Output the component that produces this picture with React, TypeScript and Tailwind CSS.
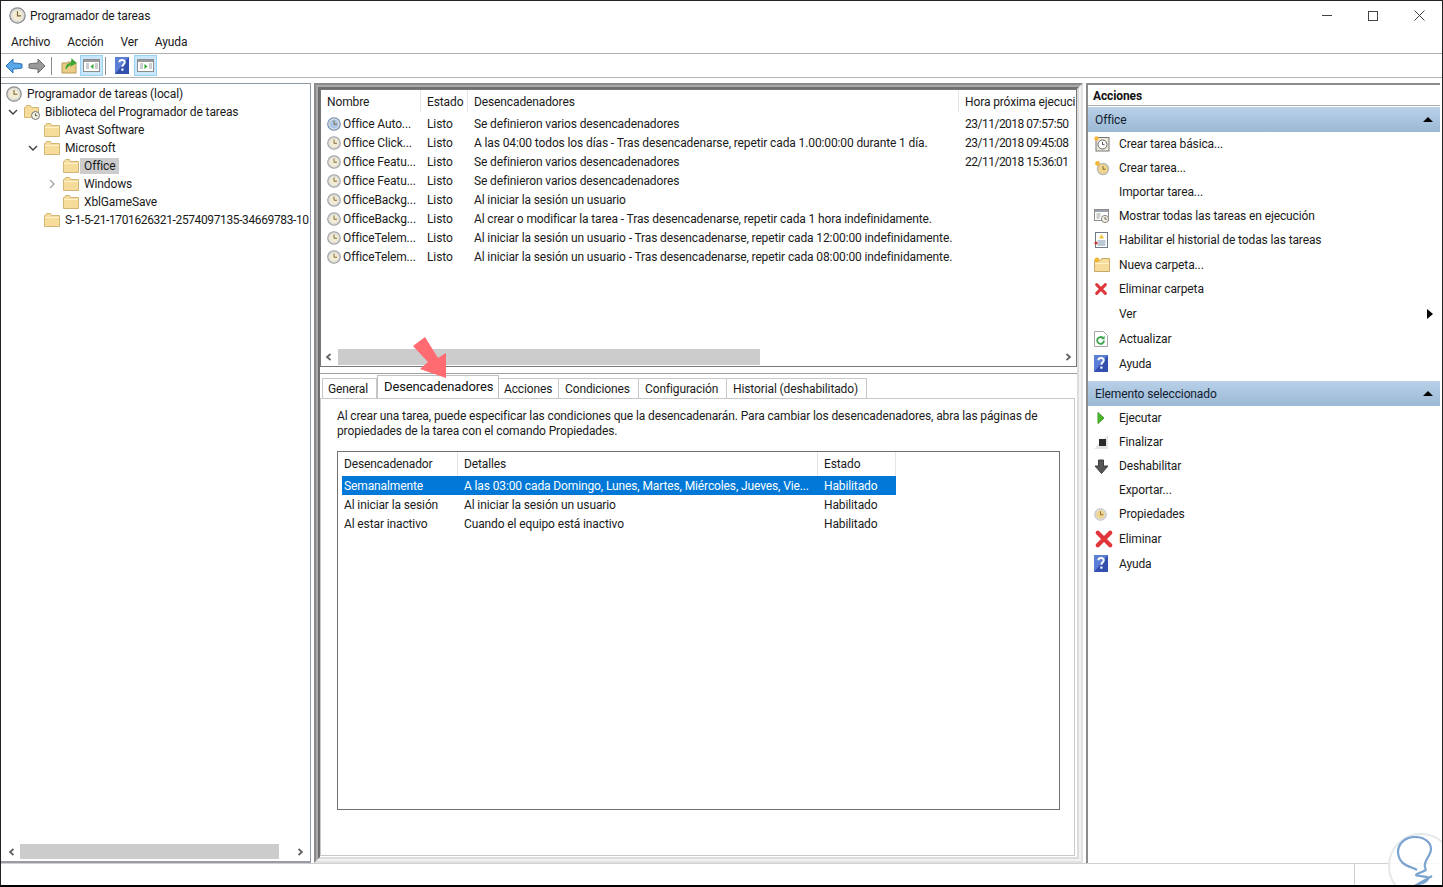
import React from "react";

const Clock = ({ size = 16, face = "#f4ecd2", ring = "#8d8d8d" }: { size?: number; face?: string; ring?: string }) => (
  <svg width={size} height={size} viewBox="0 0 16 16" className="shrink-0">
    <circle cx="8" cy="8" r="7.200" fill="#dcdcdc" stroke={ring} strokeWidth="1.200" />
    <circle cx="8" cy="8" r="5" fill={face} />
    <path d="M8 4v4.300h3.400" fill="none" stroke="#7a6a3a" strokeWidth="1.100" />
  </svg>
);

const Folder = () => (
  <svg width="16" height="14" viewBox="0 0 16 14" className="shrink-0">
    <path d="M.5 2.500h1l1-2h4l1 2h8v11H.5z" fill="#f5dc9b" stroke="#d2b678" />
    <path d="M1 4.500h14" stroke="#fff2c9" />
  </svg>
);

const LibFolder = () => (
  <svg width="16" height="16" viewBox="0 0 16 16" className="shrink-0">
    <path d="M.5 3.500h1l1-2h4l1 2h7v10H.5z" fill="#f5dc9b" stroke="#d2b678" />
    <circle cx="11.500" cy="11.500" r="4" fill="#f3efe0" stroke="#777" />
    <path d="M11.500 9.500v2.200h1.800" fill="none" stroke="#555" />
  </svg>
);

const Chevron = ({ open }: { open: boolean }) =>
  open ? (
    <svg width="10" height="10" viewBox="0 0 10 10" className="shrink-0">
      <path d="M1 3l4 4 4-4" fill="none" stroke="#404040" strokeWidth="1.400" />
    </svg>
  ) : (
    <svg width="10" height="10" viewBox="0 0 10 10" className="shrink-0">
      <path d="M3 1l4 4-4 4" fill="none" stroke="#a6a6a6" strokeWidth="1.400" />
    </svg>
  );

const Help = () => (
  <svg width="14" height="17" viewBox="0 0 14 17" className="shrink-0">
    <rect width="14" height="17" fill="#3450ae" />
    <path d="M0 0h14L0 17z" fill="#5b7fd6" />
    <path d="M4.400 5.200c0-3 5.400-3 5.400 0 0 2-2.400 2.200-2.400 4.600" fill="none" stroke="#fff" strokeWidth="1.900" />
    <rect x="6.300" y="11.500" width="2.200" height="2.200" fill="#fff" />
  </svg>
);

const PaneIcon = ({ right }: { right?: boolean }) => (
  <div className="w-[23px] h-[21px] bg-[#c9e7fb] border border-[#99d1f5] flex items-center justify-center">
    <svg width="17" height="13" viewBox="0 0 17 13">
      <rect x=".5" y=".5" width="16" height="12" fill="#fff" stroke="#8c8c8c" />
      <rect x="1" y="1" width="15" height="2" fill="#9a9a9a" />
      <path d="M3 5h3M3 7h3M3 9h3M12 5h3M12 7h3M12 9h3" stroke="#9a9a9a" />
      {right ? <path d="M7.500 5l3 2.500-3 2.500z" fill="#2ea52e" /> : <path d="M10.500 5l-3 2.500 3 2.500z" fill="#2ea52e" />}
    </svg>
  </div>
);

const XIcon = ({ size }: { size: number }) => (
  <svg width={size} height={size} viewBox="0 0 16 16" className="shrink-0">
    <path d="M3 3l10 10M13 3L3 13" stroke="#e0353a" strokeWidth="3.400" strokeLinecap="round" />
  </svg>
);

const ScrollArrow = ({ left }: { left?: boolean }) => (
  <svg width="8" height="8" viewBox="0 0 8 8" className="shrink-0">
    <path d={left ? "M5.500 1L2 4l3.500 3" : "M2.500 1L6 4 2.500 7"} fill="none" stroke="#606060" strokeWidth="1.700" />
  </svg>
);

const treeRows = [
  { label: "Programador de tareas (local)", pad: "pl-[5px]", icon: "clock" },
  { label: "Biblioteca del Programador de tareas", pad: "pl-[8px]", chevron: "open", icon: "lib" },
  { label: "Avast Software", pad: "pl-[43px]", icon: "folder" },
  { label: "Microsoft", pad: "pl-[28px]", chevron: "open", icon: "folder" },
  { label: "Office", pad: "pl-[62px]", icon: "folder", selected: true },
  { label: "Windows", pad: "pl-[47px]", chevron: "closed", icon: "folder" },
  { label: "XblGameSave", pad: "pl-[62px]", icon: "folder" },
  { label: "S-1-5-21-1701626321-2574097135-34669783-10", pad: "pl-[43px] tracking-[-0.38px]", icon: "folder" },
];

const tasks = [
  ["Office Auto...", "Se definieron varios desencadenadores", "23/11/2018 07:57:50"],
  ["Office Click...", "A las 04:00  todos los días - Tras desencadenarse, repetir cada 1.00:00:00 durante 1 día.", "23/11/2018 09:45:08"],
  ["Office Featu...", "Se definieron varios desencadenadores", "22/11/2018 15:36:01"],
  ["Office Featu...", "Se definieron varios desencadenadores", ""],
  ["OfficeBackg...", "Al iniciar la sesión un usuario", ""],
  ["OfficeBackg...", "Al crear o modificar la tarea - Tras desencadenarse, repetir cada 1 hora indefinidamente.", ""],
  ["OfficeTelem...", "Al iniciar la sesión un usuario - Tras desencadenarse, repetir cada 12:00:00 indefinidamente.", ""],
  ["OfficeTelem...", "Al iniciar la sesión un usuario - Tras desencadenarse, repetir cada 08:00:00 indefinidamente.", ""],
];

const tabs = [
  { label: "General", w: "w-[55px] pl-[5px] border-l" },
  { label: "Desencadenadores", w: "w-[122px]", active: true },
  { label: "Acciones", w: "w-[60px] pl-[5px]" },
  { label: "Condiciones", w: "w-[80px] pl-[6px]" },
  { label: "Configuración", w: "w-[88px] pl-[6px]" },
  { label: "Historial (deshabilitado)", w: "w-[140px] pl-[6px]" },
];

const triggers = [
  ["Semanalmente", "A las 03:00  cada Domingo, Lunes, Martes, Miércoles, Jueves, Vie...", "Habilitado"],
  ["Al iniciar la sesión", "Al iniciar la sesión un usuario", "Habilitado"],
  ["Al estar inactivo", "Cuando el equipo está inactivo", "Habilitado"],
];

const ActionIcon = ({ name }: { name: string }) => {
  if (name === "basic")
    return (
      <svg width="16" height="16" viewBox="0 0 16 16">
        <rect x="2" y="1.500" width="13" height="13.500" fill="#efe9dc" stroke="#777" />
        <circle cx="8.500" cy="8.500" r="4.500" fill="#fff" stroke="#666" />
        <path d="M8.500 6v2.700h2" fill="none" stroke="#555" />
        <circle cx="2.500" cy="2.500" r="2.200" fill="#f6b73c" />
      </svg>
    );
  if (name === "task")
    return (
      <svg width="16" height="16" viewBox="0 0 16 16">
        <circle cx="9" cy="9" r="5.500" fill="#f2d58a" stroke="#b9b9b9" strokeWidth="1.400" />
        <path d="M9 6v3.200h2.600" fill="none" stroke="#7a6a3a" />
        <circle cx="3.500" cy="3.500" r="2.400" fill="#f0b534" />
      </svg>
    );
  if (name === "running")
    return (
      <svg width="16" height="16" viewBox="0 0 16 16">
        <rect x=".5" y="1.500" width="14" height="11" fill="#fff" stroke="#8c8c8c" />
        <rect x="1" y="2" width="13" height="2" fill="#9aa3ad" />
        <path d="M2.500 6h4M2.500 8h4M2.500 10h3" stroke="#9a9a9a" />
        <circle cx="11" cy="11" r="3.600" fill="#f3efe0" stroke="#888" />
        <path d="M11 9v2.200h1.800" fill="none" stroke="#666" />
      </svg>
    );
  if (name === "history")
    return (
      <svg width="14" height="16" viewBox="0 0 14 16">
        <rect x="1.500" y=".5" width="12" height="15" fill="#fff" stroke="#6f7a86" />
        <path d="M3.500 9h8M3.500 11h8M3.500 13h8" stroke="#7c93ad" />
        <path d="M5 6.500L7.500 2 10 6.500z" fill="#f3c33c" />
        <circle cx="2" cy="11" r="1.600" fill="#c9362f" />
      </svg>
    );
  if (name === "newfolder")
    return (
      <svg width="16" height="15" viewBox="0 0 16 15">
        <path d="M.5 3.500h6l1-2h8v13H.5z" fill="#f5dc9b" stroke="#c9a968" />
        <path d="M1 6.500h14" stroke="#fff2c9" />
        <circle cx="3" cy="3" r="2.400" fill="#f0b534" />
      </svg>
    );
  if (name === "x") return <XIcon size={14} />;
  if (name === "bigx") return <XIcon size={20} />;
  if (name === "refresh")
    return (
      <svg width="14" height="16" viewBox="0 0 14 16">
        <path d="M.5.5h9l4 4v11H.5z" fill="#fff" stroke="#a6a6a6" />
        <path d="M10 9.500a3.400 3.400 0 1 1-1-2.500" fill="none" stroke="#3ba34a" strokeWidth="1.800" />
        <path d="M10.600 4.800v3.400H7.200z" fill="#3ba34a" />
      </svg>
    );
  if (name === "help") return <Help />;
  if (name === "play")
    return (
      <svg width="16" height="14" viewBox="0 0 16 14">
        <path d="M4 1.500l6 5.500-6 5.500z" fill="#4cb82c" stroke="#3d9e22" />
      </svg>
    );
  if (name === "stop")
    return (
      <svg width="16" height="14" viewBox="0 0 16 14">
        <path d="M0 14L14 0v14z" fill="#e4e4e4" />
        <rect x="5" y="4" width="7" height="7" fill="#2b2b2b" />
      </svg>
    );
  if (name === "down")
    return (
      <svg width="15" height="15" viewBox="0 0 15 15">
        <path d="M4.500 1h5v6H14l-6.500 7.500L1 7h3.500z" fill="#555" stroke="#3f3f3f" />
      </svg>
    );
  if (name === "prop") return <Clock size={13} face="#f2d58a" ring="#c4c4c4" />;
  return null;
};

type Action = { label: string; icon?: string; h: string; more?: boolean };

const officeActions: Action[] = [
  { label: "Crear tarea básica...", icon: "basic", h: "h-[24px]" },
  { label: "Crear tarea...", icon: "task", h: "h-[24px]" },
  { label: "Importar tarea...", h: "h-[24px]" },
  { label: "Mostrar todas las tareas en ejecución", icon: "running", h: "h-[24px]" },
  { label: "Habilitar el historial de todas las tareas", icon: "history", h: "h-[24px]" },
  { label: "Nueva carpeta...", icon: "newfolder", h: "h-[25px]" },
  { label: "Eliminar carpeta", icon: "x", h: "h-[24px]" },
  { label: "Ver", h: "h-[25px]", more: true },
  { label: "Actualizar", icon: "refresh", h: "h-[25px]" },
  { label: "Ayuda", icon: "help", h: "h-[25px]" },
];

const itemActions: Action[] = [
  { label: "Ejecutar", icon: "play", h: "h-[24px]" },
  { label: "Finalizar", icon: "stop", h: "h-[24px]" },
  { label: "Deshabilitar", icon: "down", h: "h-[24px]" },
  { label: "Exportar...", h: "h-[24px]" },
  { label: "Propiedades", icon: "prop", h: "h-[24px]" },
  { label: "Eliminar", icon: "bigx", h: "h-[25px]" },
  { label: "Ayuda", icon: "help", h: "h-[25px]" },
];

const ActionList = ({ items }: { items: Action[] }) => (
  <div>
    {items.map((a, i) => (
      <div key={i} className={`${a.h} flex items-center pr-[7px]`}>
        <div className="w-[31px] pl-[6px] flex items-center justify-start">{a.icon && <ActionIcon name={a.icon} />}</div>
        <span className="flex-1">{a.label}</span>
        {a.more && <div className="w-0 h-0 border-y-[5px] border-y-transparent border-l-[6px] border-l-black" />}
      </div>
    ))}
  </div>
);

const Band = ({ title }: { title: string }) => (
  <div className="h-[25px] flex items-center justify-between pl-[7px] pr-[7px] bg-gradient-to-b from-[#b9d1e9] to-[#9bb8d4] text-[#10202f]">
    <span>{title}</span>
    <div className="w-0 h-0 border-x-[5px] border-x-transparent border-b-[5px] border-b-black" />
  </div>
);

export default function App() {
  return (
    <div
      className="relative w-[1443px] h-[887px] overflow-hidden bg-white border-x-[1px] border-t-[1px] border-b-[2px] border-x-[#222] border-t-[#222] border-b-black flex flex-col text-[12px] leading-[16px] tracking-[-0.12px] text-[#1a1a1a]"
      style={{ fontFamily: 'Roboto, "Noto Sans", sans-serif' }}
    >
      {/* title bar */}
      <div className="h-[29px] flex items-center shrink-0">
        <div className="pl-[8px] pr-[4px]">
          <Clock size={17} />
        </div>
        <span>Programador de tareas</span>
        <div className="ml-auto flex items-center text-[#333]">
          <div className="w-[46px] flex justify-center">
            <div className="w-[10px] h-px bg-[#444]" />
          </div>
          <div className="w-[46px] flex justify-center">
            <div className="w-[10px] h-[10px] border border-[#444]" />
          </div>
          <div className="w-[46px] flex justify-center">
            <svg width="11" height="11" viewBox="0 0 11 11">
              <path d="M.5.5l10 10M10.500.5l-10 10" stroke="#444" />
            </svg>
          </div>
        </div>
      </div>

      {/* menu */}
      <div className="h-[24px] shrink-0 flex items-center gap-[17px] pl-[10px] border-b border-[#b0b0b0] pt-[1px]">
        <span>Archivo</span>
        <span>Acción</span>
        <span>Ver</span>
        <span>Ayuda</span>
      </div>

      {/* toolbar */}
      <div className="h-[24px] shrink-0 flex items-center pl-[4px] border-b border-[#b5b5b5]">
        <svg width="18" height="16" viewBox="0 0 18 16">
          <path d="M8 1L1 8l7 7v-4c3 0 6-.5 9-1V6c-3-.5-6-1-9-1z" fill="#58a8e8" stroke="#2f72b8" />
        </svg>
        <svg width="18" height="16" viewBox="0 0 18 16" className="ml-[5px]">
          <path d="M10 1l7 7-7 7v-4c-3 0-6-.5-9-1V6c3-.5 6-1 9-1z" fill="#9a9a9a" stroke="#6a6a6a" />
        </svg>
        <div className="w-px h-[18px] bg-[#8c8c8c] ml-[5px] mr-[9px]" />
        <svg width="16" height="16" viewBox="0 0 16 16">
          <path d="M1 5h5l1-1h8v11H1z" fill="#e9cd87" stroke="#b99a55" />
          <path d="M5 11c0-4 3-6 6-6M11 1.500l3.500 3.500L10 7.500z" fill="#3aa535" stroke="#3aa535" strokeWidth="1.200" />
        </svg>
        <div className="ml-[3px]">
          <PaneIcon />
        </div>
        <div className="w-px h-[18px] bg-[#8c8c8c] ml-[2px] mr-[9px]" />
        <Help />
        <div className="ml-[5px]">
          <PaneIcon right />
        </div>
      </div>

      <div className="h-[5px] shrink-0" />

      {/* panes */}
      <div className="flex-1 min-h-0 flex">
        {/* tree */}
        <div className="w-[310px] shrink-0 flex flex-col border-t border-r border-[#8f9aa3] border-b-2 border-b-[#9a9aa8]">
          <div className="flex-1 pt-px overflow-hidden">
            {treeRows.map((r, i) => (
              <div key={i} className={`h-[18px] flex items-center whitespace-nowrap ${r.pad}`}>
                {r.chevron && (
                  <div className="mr-[6px] -ml-px">
                    <Chevron open={r.chevron === "open"} />
                  </div>
                )}
                {r.icon === "clock" ? <Clock size={16} /> : r.icon === "lib" ? <LibFolder /> : <Folder />}
                <span className={r.selected ? "ml-[1px] px-[4px] bg-[#cccccc]" : "ml-[1px] px-[4px]"}>{r.label}</span>
              </div>
            ))}
          </div>
          <div className="h-[15px] mb-[2px] shrink-0 flex items-center pl-[7px] pr-[6px]">
            <ScrollArrow left />
            <div className="ml-[4px] w-[259px] h-[15px] bg-[#cccccc]" />
            <div className="ml-auto">
              <ScrollArrow />
            </div>
          </div>
        </div>

        {/* centre: striped frame, then the two panels */}
        <div className="ml-[3px] w-[769px] shrink-0 flex border-l-2 border-t-2 border-r-2 border-b-2 border-l-[#8a8a8a] border-t-[#8a8a8a] border-r-[#e2e2e2] border-b-[#e2e2e2]">
          <div className="flex-1 min-w-0 flex border-l-2 border-t-2 border-r-2 border-b-2 border-l-[#a9a9a9] border-t-[#a9a9a9] border-r-[#f2f2f2] border-b-[#f2f2f2]">
            <div className="flex-1 min-w-0 flex flex-col border-l-2 border-t-2 border-r-2 border-b-2 border-l-[#6e6e6e] border-t-[#6e6e6e] border-r-[#dcdcdc] border-b-[#dcdcdc]">
              <div className="h-[278px] shrink-0 border border-[#777] flex flex-col">
                <div className="h-[22px] shrink-0 flex items-stretch whitespace-nowrap overflow-hidden">
                  <div className="w-[100px] shrink-0 pl-[6px] pt-[2px] flex items-center border-r border-[#e5e5e5]">Nombre</div>
                  <div className="w-[47px] shrink-0 pl-[6px] pt-[2px] flex items-center border-r border-[#e5e5e5]">Estado</div>
                  <div className="w-[491px] shrink-0 pl-[6px] pt-[2px] flex items-center border-r border-[#e5e5e5]">Desencadenadores</div>
                  <div className="pl-[6px] pt-[2px] flex items-center">Hora próxima ejecuci</div>
                </div>
                <div className="flex-1 pt-[2px]">
                  {tasks.map((t, i) => (
                    <div key={i} className="h-[19px] flex items-center whitespace-nowrap">
                      <div className="w-[100px] shrink-0 pl-[6px] flex items-center gap-[2px]">
                        <Clock size={14} face={i === 0 ? "#a9c4e6" : "#f4ecd2"} ring={i === 0 ? "#6a8bb5" : "#a0a0a0"} />
                        <span>{t[0]}</span>
                      </div>
                      <div className="w-[47px] shrink-0 pl-[6px]">Listo</div>
                      <div className="w-[491px] shrink-0 pl-[6px]">{t[1]}</div>
                      <div className="pl-[6px] tracking-[-0.5px]">{t[2]}</div>
                    </div>
                  ))}
                </div>
                <div className="h-[16px] mb-px shrink-0 flex items-center pl-[4px] pr-[4px]">
                  <ScrollArrow left />
                  <div className="ml-[5px] w-[422px] h-[16px] bg-[#cccccc]" />
                  <div className="ml-auto">
                    <ScrollArrow />
                  </div>
                </div>
              </div>

              <div className="h-[7px] shrink-0 border-b border-[#a0a0a0]" />

              <div className="flex-1 min-h-0 flex flex-col pr-[2px] mb-[1px]">
                <div className="h-[24px] shrink-0 flex items-end pl-[2px] whitespace-nowrap">
                  {tabs.map((t) =>
                    t.active ? (
                      <div key={t.label} className={`${t.w} h-[23px] pl-[6px] pt-[3px] text-[13px] bg-white border border-b-0 border-[#c0c0c0] text-[#111]`}>
                        {t.label}
                      </div>
                    ) : (
                      <div key={t.label} className={`${t.w} h-[20px] pt-[2px] bg-white border-r border-t border-[#c8c8c8]`}>
                        {t.label}
                      </div>
                    ),
                  )}
                </div>
                <div className="flex-1 min-h-0 border border-[#c8c8c8] pl-[16px] pr-[14px] pt-[10px] pb-[45px] flex flex-col">
                  <p className="leading-[15px] whitespace-nowrap">
                    Al crear una tarea, puede especificar las condiciones que la desencadenarán. Para cambiar los desencadenadores, abra las páginas de
                    <br />
                    propiedades de la tarea con el comando Propiedades.
                  </p>
                  <div className="mt-[12px] flex-1 border border-[#707070]">
                    <div className="h-[24px] flex items-stretch">
                      <div className="w-[120px] pl-[6px] flex items-center border-r border-[#e5e5e5]">Desencadenador</div>
                      <div className="w-[360px] pl-[6px] flex items-center border-r border-[#e5e5e5]">Detalles</div>
                      <div className="w-[78px] pl-[6px] flex items-center border-r border-[#e5e5e5]">Estado</div>
                    </div>
                    <div className="ml-[4px] w-[554px]">
                      {triggers.map((t, i) => (
                        <div key={i} className={`h-[19px] flex items-center whitespace-nowrap ${i === 0 ? "bg-[#0078d7] text-white" : ""}`}>
                          <div className="w-[122px] pl-[2px]">{t[0]}</div>
                          <div className="w-[360px]">{t[1]}</div>
                          <div>{t[2]}</div>
                        </div>
                      ))}
                    </div>
                  </div>
                </div>
              </div>
            </div>
          </div>
        </div>

        {/* actions */}
        <div className="ml-[3px] mr-[2px] flex-1 min-w-0 border-l-2 border-t-2 border-[#8c8c8c] flex flex-col">
          <div className="h-[21px] shrink-0 pl-[5px] pt-[3px] border-b border-[#aaa] font-bold text-[#111]">Acciones</div>
          <div className="h-px shrink-0" />
          <Band title="Office" />
          <ActionList items={officeActions} />
          <div className="h-[5px] shrink-0" />
          <Band title="Elemento seleccionado" />
          <ActionList items={itemActions} />
        </div>
      </div>

      {/* status bar */}
      <div className="h-[22px] shrink-0 flex border-t border-[#d0d0d0]">
        <div className="ml-auto w-[88px] border-l border-[#cfcfcf]" />
      </div>

      {/* tutorial arrow */}
      <svg width="40" height="46" viewBox="0 0 40 46" className="absolute left-[409px] top-[334px]">
        <path d="M3 11L15 2l13 21 8-5v25L10 34l8-7z" fill="#ff6b70" />
      </svg>

      {/* watermark */}
      <div className="absolute left-[1387px] top-[832px] w-[66px] h-[66px] rounded-full bg-white/85 border-[2px] border-[#e4e8ea]" />
      <svg width="40" height="50" viewBox="0 0 40 50" className="absolute left-[1395px] top-[835px]">
        <path
          d="M21 34C14 30 3 30 2 16 2 7 10 1 19 1c9 0 16 5 16 12 0 7-8 12-6 18 1 4 3 2-8 7-5 3 13 1 11 5-2 4-8 5-10 5l14-8"
          fill="none"
          stroke="#7ba3cf"
          strokeWidth="2.200"
        />
      </svg>
    </div>
  );
}
